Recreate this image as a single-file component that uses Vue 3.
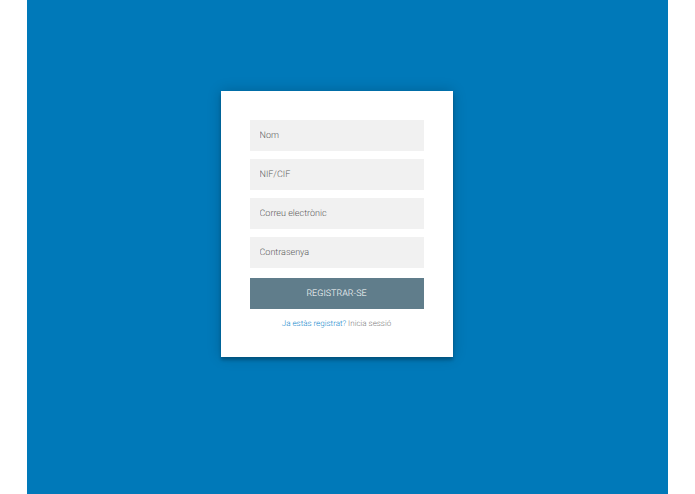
<template>
  <main class="page">
    <div class="login-page">
      <form class="form" @submit.prevent="handleSubmit">
        <div class="fields">
          <input
            v-for="field in fields"
            :key="field.name"
            v-model="values[field.name]"
            :type="field.type"
            :name="field.name"
            :placeholder="field.label"
            :aria-label="field.label"
          />
        </div>
        <button type="submit">Registrar-se</button>
        <p class="message">
          <a href="#">Ja estàs registrat?</a> Inicia sessió
        </p>
      </form>
    </div>
  </main>
</template>

<script setup>
import { reactive } from 'vue';

const fields = [
  { name: 'name', type: 'text', label: 'Nom' },
  { name: 'nif', type: 'text', label: 'NIF/CIF' },
  { name: 'email', type: 'email', label: 'Correu electrònic' },
  { name: 'password', type: 'password', label: 'Contrasenya' }
];

const values = reactive({ name: '', nif: '', email: '', password: '' });
const emit = defineEmits(['register']);

const handleSubmit = () => {
  emit('register', { ...values });
};
</script>

<style>
body {
  margin: 0;
  background: #fff;
}
</style>

<style scoped>
.page {
  box-sizing: border-box;
  min-height: 100vh;
  margin: 0 27px;
  padding: 91px 22px 91px 0;
  background: #0079b9;
  font-family: Roboto, "Liberation Sans", sans-serif;
  font-weight: 300;
  text-rendering: geometricPrecision;
}

.login-page {
  max-width: 232px;
  margin: 0 auto;
}

.form {
  display: flex;
  flex-direction: column;
  gap: 10px;
  padding: 29px;
  background: #fff;
  text-align: center;
  box-shadow: 0 0 13px rgba(0, 0, 0, 0.2), 0 3px 3px rgba(0, 0, 0, 0.24);
}

.fields {
  display: flex;
  flex-direction: column;
  gap: 8px;
}

.form input,
.form button {
  box-sizing: border-box;
  width: 100%;
  height: 31px;
  margin: 0;
  padding: 0 10px;
  border: 0;
  border-radius: 0;
  outline: 0;
  font-family: inherit;
  font-size: 9px;
  font-weight: 300;
  text-rendering: inherit;
}

.form input {
  background: #f1f1f1;
  color: #333;
}

.form input::placeholder {
  color: #606060;
  opacity: 1;
}

.form button {
  background: #607d8b;
  color: #fff;
  text-transform: uppercase;
  cursor: pointer;
}

.message {
  margin: 0;
  color: #808080;
  font-size: 8px;
  line-height: 9px;
}

.message a {
  color: #1488cc;
  text-decoration: none;
}
</style>
